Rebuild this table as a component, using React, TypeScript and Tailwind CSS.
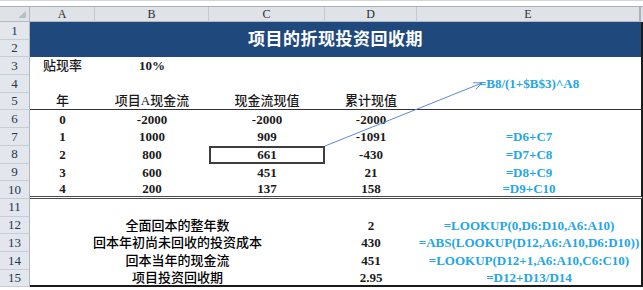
import React from 'react';

const FONT = { fontFamily: '"Liberation Serif", "Noto Sans CJK SC", serif' };

const colW = ['w-[65px]', 'w-[114px]', 'w-[116px]', 'w-[92px]', 'w-[224px]'];

type Cell = { text?: string; blue?: boolean; selected?: boolean; cjk?: boolean };

const RowNum: React.FC<{ n: number }> = ({ n }) => (
  <div className="w-[30px] h-full shrink-0 flex items-center justify-center bg-[#e3e7ed] border-b border-r border-b-[#c7cdd5] border-r-[#aeb6c1] text-[13px] font-normal text-[#24364f]">
    {n}
  </div>
);

const Row: React.FC<{ n: number; cells?: Cell[]; label?: string; extra?: string }> = ({ n, cells = [], label, extra = '' }) => {
  return (
    <div className="flex h-[17.7px]">
      <RowNum n={n} />
      <div className={`flex h-full border-r-2 border-r-[#1b1b1b] ${extra}`}>
        {label !== undefined ? (
          <div className="w-[295px] flex items-center justify-center whitespace-nowrap font-medium">{label}</div>
        ) : null}
        {colW.map((w, i) => {
          if (label !== undefined && i < 3) return null;
          const c = cells[i] || {};
          return (
            <div
              key={i}
              className={`${w} h-full flex items-center justify-center whitespace-nowrap ${c.cjk ? 'font-medium' : ''} ${c.blue ? 'text-[#23a6e6]' : 'text-[#1a1a1a]'} ${c.selected ? 'border-2 border-[#3d3d3d]' : ''}`}
            >
              {c.text}
            </div>
          );
        })}
      </div>
    </div>
  );
};

const App: React.FC = () => {
  return (
    <div className="relative w-[643px] h-[290px] overflow-hidden bg-white font-bold text-[13px]" style={FONT}>
      {/* formula bar edge */}
      <div className="h-[7px] border-t border-b border-t-[#d3d7dc] border-b-[#a9b1bb] bg-white" />

      {/* column headers */}
      <div className="flex h-[15px] bg-[#dfe3e8] text-[12px] font-normal text-[#2b2b2b]">
        <div className="relative w-[30px] h-full border-r border-b border-[#b3bac4]">
          <svg className="absolute right-[3px] bottom-[3px]" width="8" height="7" viewBox="0 0 8 7">
            <polygon points="8,0 8,7 0,7" fill="#b7bec7" />
          </svg>
        </div>
        {['A', 'B', 'C', 'D', 'E'].map((l, i) => (
          <div
            key={l}
            className={`${colW[i]} h-full flex items-center justify-center border-b border-[#b3bac4] ${i === 4 ? 'border-r-2 border-r-[#aab1ba]' : 'border-r border-r-[#c3c9d1]'}`}
          >
            {l}
          </div>
        ))}
      </div>

      {/* title, rows 1-2 */}
      <div className="flex h-[35.4px]">
        <div className="flex flex-col">
          <div className="h-[17.7px]"><RowNum n={1} /></div>
          <div className="h-[17.7px]"><RowNum n={2} /></div>
        </div>
        <div className="w-[613px] h-full bg-[#1f497d] border-r-2 border-r-[#1b1b1b] flex items-center justify-center text-white text-[17px] tracking-[0.5px]">
          项目的折现投资回收期
        </div>
      </div>

      <Row n={3} cells={[{ text: '贴现率', cjk: true }, { text: '10%' }]} />
      <Row n={4} cells={[{}, {}, {}, {}, { text: '=B8/(1+$B$3)^A8', blue: true }]} />
      <Row n={5} extra="border-b border-b-[#333]" cells={[{ text: '年', cjk: true }, { text: '项目A现金流', cjk: true }, { text: '现金流现值', cjk: true }, { text: '累计现值', cjk: true }]} />
      <Row n={6} cells={[{ text: '0' }, { text: '-2000' }, { text: '-2000' }, { text: '-2000' }]} />
      <Row n={7} cells={[{ text: '1' }, { text: '1000' }, { text: '909' }, { text: '-1091' }, { text: '=D6+C7', blue: true }]} />
      <Row n={8} cells={[{ text: '2' }, { text: '800' }, { text: '661', selected: true }, { text: '-430' }, { text: '=D7+C8', blue: true }]} />
      <Row n={9} cells={[{ text: '3' }, { text: '600' }, { text: '451' }, { text: '21' }, { text: '=D8+C9', blue: true }]} />
      <Row n={10} extra="border-b-[3px] border-double border-b-[#4a4a4a]" cells={[{ text: '4' }, { text: '200' }, { text: '137' }, { text: '158' }, { text: '=D9+C10', blue: true }]} />
      <Row n={11} />
      <Row n={12} label="全面回本的整年数" cells={[{}, {}, {}, { text: '2' }, { text: '=LOOKUP(0,D6:D10,A6:A10)', blue: true }]} />
      <Row n={13} label="回本年初尚未回收的投资成本" cells={[{}, {}, {}, { text: '430' }, { text: '=ABS(LOOKUP(D12,A6:A10,D6:D10))', blue: true }]} />
      <Row n={14} label="回本当年的现金流" cells={[{}, {}, {}, { text: '451' }, { text: '=LOOKUP(D12+1,A6:A10,C6:C10)', blue: true }]} />
      <Row n={15} label="项目投资回收期" extra="border-b-2 border-b-[#1b1b1b]" cells={[{}, {}, {}, { text: '2.95' }, { text: '=D12+D13/D14', blue: true }]} />

      {/* arrow from C8 to the formula note */}
      <svg className="absolute left-0 top-0 pointer-events-none" width="643" height="290">
        <line x1="325" y1="146" x2="482" y2="83" stroke="#5b8bd0" strokeWidth="1" />
        <polyline points="475.9,89.3 482,83 473.3,82.7" fill="none" stroke="#5b8bd0" strokeWidth="1" />
      </svg>
    </div>
  );
};

export default App;
